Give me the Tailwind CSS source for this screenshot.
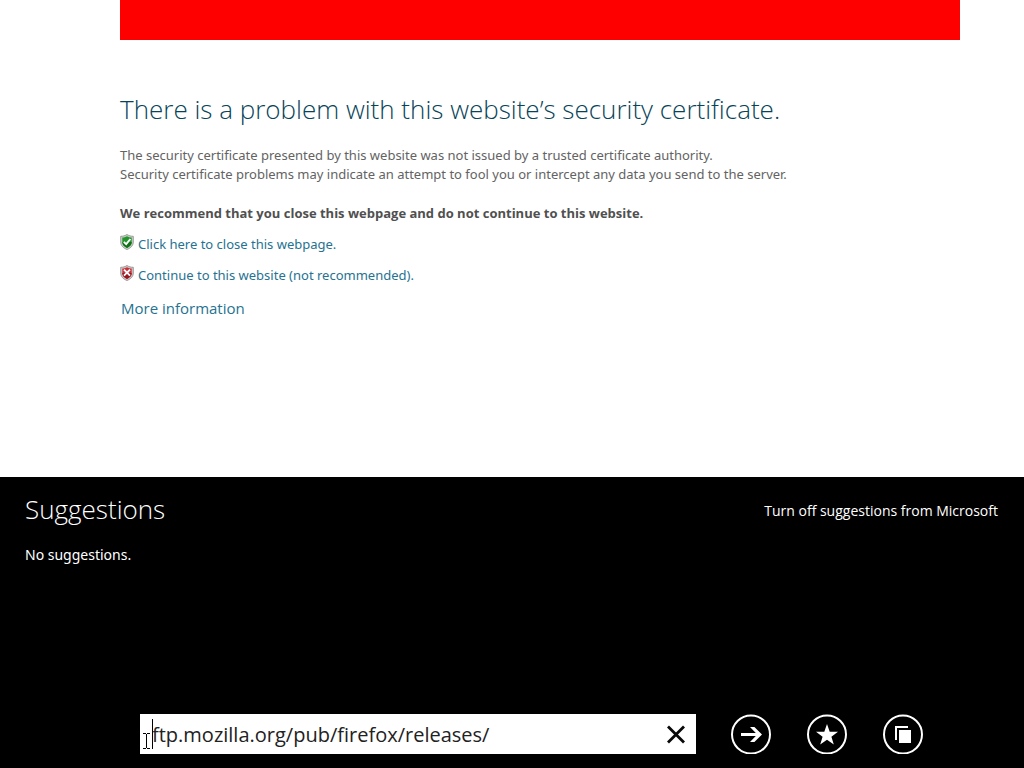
<!DOCTYPE html>
<html lang="en">
<head>
<meta charset="utf-8">
<meta name="viewport" content="width=device-width, initial-scale=1">
<title>Certificate Error</title>
<script src="https://cdn.jsdelivr.net/npm/@tailwindcss/browser@4"></script>
</head>
<body class="flex min-h-screen flex-col bg-white font-['Open_Sans','Noto_Sans',sans-serif]">
<main class="flex-1 pr-16 pb-8 pl-[120px]">
  <div class="h-10 bg-[#ff0000]"></div>
  <h1 class="mt-[51px] text-[26px] leading-9 font-light text-[#084458]">There is a problem with this website’s security certificate.</h1>
  <p class="mt-[19px] font-['Noto_Sans',sans-serif] text-[13px] leading-[19px] text-[#636363]">The security certificate presented by this website was not issued by a trusted certificate authority.<br>Security certificate problems may indicate an attempt to fool you or intercept any data you send to the server.</p>
  <p class="mt-5 text-[13px] leading-[19px] font-bold text-[#505050]">We recommend that you close this webpage and do not continue to this website.</p>
  <ul class="mt-3 flex flex-col gap-3 font-['Noto_Sans',sans-serif] text-[13px] leading-[19px] text-[#267291]">
    <li><a href="#" class="flex items-start gap-1">
      <svg class="-mt-px h-4 w-[14px] shrink-0" viewBox="0 0 14 16" aria-hidden="true"><path d="M7 .5C5 1.8 3 2.300 .7 2.300V8c0 3.500 2.500 6 6.300 7.500 3.800-1.500 6.300-4 6.300-7.500V2.300C11 2.300 9 1.800 7 .5z" fill="#c9cfc9" stroke="#858b85" stroke-width=".8"/><path d="M7 2.200C5.500 3.100 4 3.500 2.300 3.600V8c0 2.700 1.800 4.600 4.700 5.900 2.900-1.300 4.700-3.200 4.700-5.900V3.600C10 3.500 8.500 3.100 7 2.200z" fill="#24942c"/><path d="M2.300 8c0 2.700 1.800 4.600 4.700 5.900 2.900-1.300 4.700-3.200 4.700-5.900z" fill="#12701b"/><path d="M3.800 7.800 6.200 10.200 10.400 5" fill="none" stroke="#fff" stroke-width="1.900"/></svg>
      <span>Click here to close this webpage.</span></a></li>
    <li><a href="#" class="flex items-start gap-1">
      <svg class="-mt-px h-4 w-[14px] shrink-0" viewBox="0 0 14 16" aria-hidden="true"><path d="M7 .5C5 1.800 3 2.300 .7 2.300V8c0 3.500 2.500 6 6.300 7.500 3.800-1.500 6.300-4 6.300-7.500V2.300C11 2.300 9 1.800 7 .5z" fill="#cfc9c9" stroke="#8b8585" stroke-width=".8"/><path d="M7 2.200C5.500 3.100 4 3.500 2.300 3.600V8c0 2.700 1.800 4.600 4.700 5.900 2.900-1.300 4.700-3.200 4.700-5.900V3.600C10 3.500 8.500 3.100 7 2.200z" fill="#c9303a"/><path d="M2.300 8c0 2.700 1.800 4.600 4.700 5.900 2.900-1.300 4.700-3.200 4.700-5.900z" fill="#961720"/><path d="M4 4.700 10 10.700M10 4.700 4 10.700" fill="none" stroke="#fff" stroke-width="1.900"/></svg>
      <span>Continue to this website (not recommended).</span></a></li>
  </ul>
  <a href="#" class="mt-[11px] ml-px inline-block text-[15px] leading-6 text-[#267291]">More information</a>
</main>
<section class="flex min-h-[291px] flex-col bg-black text-white" aria-label="Address bar">
  <div class="flex items-center justify-between pt-4 pr-[26px] pl-[25px]">
    <h2 class="text-[26px] leading-8 font-light">Suggestions</h2>
    <button type="button" class="pt-1 text-[14px] leading-5">Turn off suggestions from Microsoft</button>
  </div>
  <p class="mt-5 pl-[25px] font-['Noto_Sans',sans-serif] text-[14px] leading-5">No suggestions.</p>
  <form class="mt-auto flex items-center gap-[35px] pr-[101px] pb-[14px] pl-[140px]">
    <div class="relative flex h-10 flex-1 items-center bg-white text-[#222]">
      <input type="text" aria-label="Address" value="ftp.mozilla.org/pub/firefox/releases/" class="h-full min-w-0 flex-1 bg-transparent pt-px pl-3 text-[20px] outline-none">
      <button type="button" aria-label="Clear address" class="flex size-10 items-center justify-center">
        <svg class="size-5" viewBox="0 0 20 20" aria-hidden="true"><path d="M2 2.500 18 18.500M18 2.500 2 18.500" stroke="#080808" stroke-width="2.800"/></svg>
      </button>
      <span class="absolute top-[5px] left-3 h-[30px] w-px bg-black"></span>
      <svg class="absolute top-[19px] left-[3px] h-4 w-[7px]" viewBox="0 0 7 16" aria-hidden="true"><path d="M0 .5H3M4 .5H7M3.500 1V15M0 15.500H3M4 15.500H7" stroke="#000"/></svg>
    </div>
    <div class="flex gap-9">
      <button type="button" aria-label="Go" class="size-10 shrink-0">
        <svg viewBox="0 0 40 40" aria-hidden="true"><circle cx="20" cy="20.500" r="19" fill="none" stroke="#fff" stroke-width="2"/><path d="M10 19H24.800L19 13H23.400L31 20.500 23.400 28H19L24.800 22H10z" fill="#fff"/></svg>
      </button>
      <button type="button" aria-label="Favorites" class="size-10 shrink-0">
        <svg viewBox="0 0 40 40" aria-hidden="true"><circle cx="20" cy="20.500" r="19" fill="none" stroke="#fff" stroke-width="2"/><path d="M20 10 22.700 17.800H31L24.400 22.800 26.800 30.500 20 25.800 13.200 30.500 15.600 22.800 9 17.800H17.300z" fill="#fff"/></svg>
      </button>
      <button type="button" aria-label="Tabs" class="size-10 shrink-0">
        <svg viewBox="0 0 40 40" aria-hidden="true"><circle cx="20" cy="20.500" r="19" fill="none" stroke="#fff" stroke-width="2"/><path d="M12 12H25V14H14V26H12zM16 16H28V29H16z" fill="#fff"/></svg>
      </button>
    </div>
  </form>
</section>
</body>
</html>
